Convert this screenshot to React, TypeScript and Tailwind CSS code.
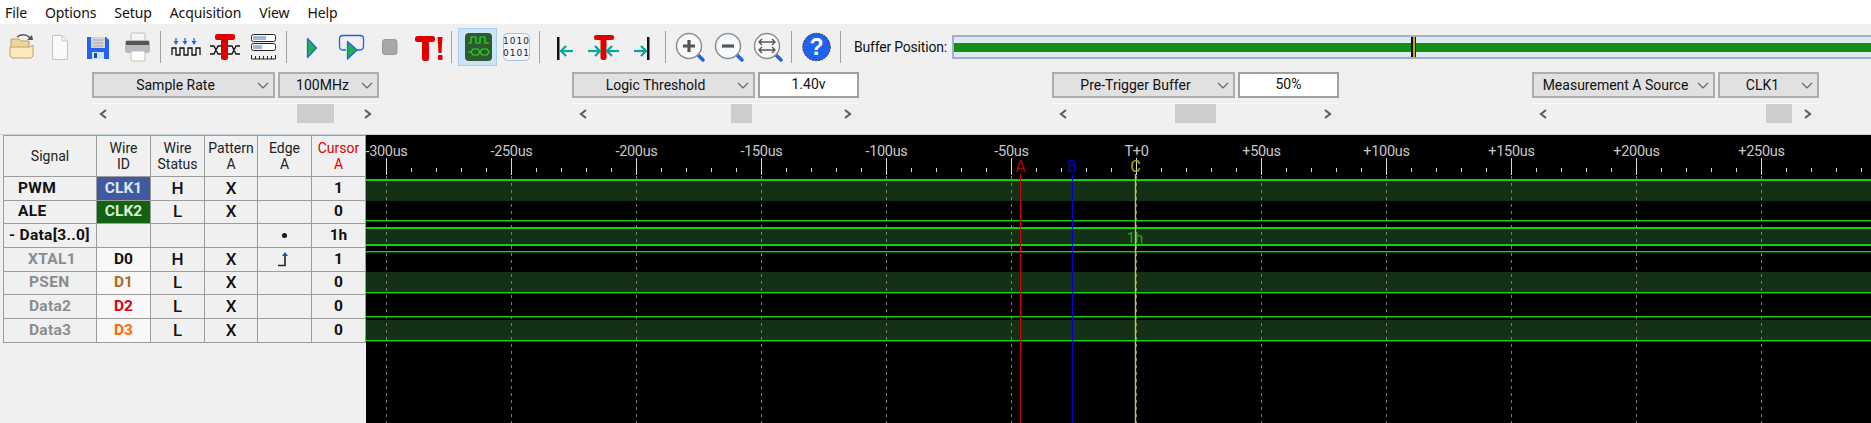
import type { ReactElement, ReactNode } from "react";

const menuItems = ["File", "Options", "Setup", "Acquisition", "View", "Help"];

const signals = [
  { name: "PWM", indent: "pl-[14px]", tone: "text-[#111]", id: "CLK1", idClass: "bg-[#3f5a9f] text-[#dfe6f5]", status: "H", pattern: "X", edge: "", cursor: "1" },
  { name: "ALE", indent: "pl-[14px]", tone: "text-[#111]", id: "CLK2", idClass: "bg-[#126212] text-[#d9eed9]", status: "L", pattern: "X", edge: "", cursor: "0" },
  { name: "- Data[3..0]", indent: "pl-[5px]", tone: "text-[#111]", id: "", idClass: "", status: "", pattern: "", edge: "dot", cursor: "1h" },
  { name: "XTAL1", indent: "pl-[24px]", tone: "text-[#8c8c8c]", id: "D0", idClass: "bg-[#f8f8f8] text-[#111]", status: "H", pattern: "X", edge: "rise", cursor: "1" },
  { name: "PSEN", indent: "pl-[25px]", tone: "text-[#8c8c8c]", id: "D1", idClass: "bg-[#f8f8f8] text-[#b0671f]", status: "L", pattern: "X", edge: "", cursor: "0" },
  { name: "Data2", indent: "pl-[25px]", tone: "text-[#8c8c8c]", id: "D2", idClass: "bg-[#f8f8f8] text-[#dd0011]", status: "L", pattern: "X", edge: "", cursor: "0" },
  { name: "Data3", indent: "pl-[25px]", tone: "text-[#8c8c8c]", id: "D3", idClass: "bg-[#f8f8f8] text-[#ff6a00]", status: "L", pattern: "X", edge: "", cursor: "0" }
];

const controls = [
  { label: "Sample Rate", value: "100MHz", input: false, thumb: "ml-[205px] w-[37px]" },
  { label: "Logic Threshold", value: "1.40v", input: true, thumb: "ml-[159px] w-[21px]" },
  { label: "Pre-Trigger Buffer", value: "50%", input: true, thumb: "ml-[123px] w-[41px]" },
  { label: "Measurement A Source", value: "CLK1", input: false, thumb: "ml-[234px] w-[26px]" }
];

const timeLabels = ["-300us", "-250us", "-200us", "-150us", "-100us", "-50us", "T+0", "+50us", "+100us", "+150us", "+200us", "+250us"];
const tickCount = 60;
const canvasFont = "Roboto, sans-serif";

function ToolButton({ children, active }: { children: ReactNode; active?: boolean }): ReactElement {
  return (
    <div className={`h-[38px] w-[39px] shrink-0 ${active ? "border border-[#a6d0f2] bg-[#cce4f7]" : ""}`}>
      <svg width="39" height="38" viewBox="0 0 39 38" className={active ? "-m-px" : ""}>
        {children}
      </svg>
    </div>
  );
}

function Separator({ className }: { className: string }): ReactElement {
  return <div className={`h-[32px] w-px shrink-0 bg-[#a0a0a0] ${className}`} />;
}

function Arrow({ x, dir }: { x: number; dir: 1 | -1 }): ReactElement {
  // teal arrow, x is where the tip sits
  return (
    <g stroke="#00a8a0" strokeWidth="2.2" fill="none">
      <path d={`M${x} 23H${x - dir * 12}`} />
      <path d={`M${x - dir * 5} 18L${x} 23L${x - dir * 5} 28`} />
    </g>
  );
}

function Lens({ children }: { children: ReactNode }): ReactElement {
  return (
    <>
      <path d="M25 25L32 32" stroke="#1f62f0" strokeWidth="3.5" strokeLinecap="round" />
      <circle cx="18" cy="18" r="12.5" fill="#f6f9fc" stroke="#8f8f8f" strokeWidth="1.5" />
      {children}
    </>
  );
}

function Toolbar(): ReactElement {
  return (
    <div className="flex h-[38px] items-center pl-[2px]">
      <ToolButton>
        <path d="M9 15V11H17L19 13H27V28H9Z" fill="#eed59c" stroke="#c0a264" strokeWidth="1" />
        <path d="M8 19H28L31 17V28L29 30H10L8 28Z" fill="#fbe8bd" stroke="#c0a264" strokeWidth="1" />
        <path d="M15 9C19 6 25 6 28 10" fill="none" stroke="#555" strokeWidth="1.5" />
        <path d="M25 12L31 12L30 7Z" fill="#555" />
      </ToolButton>
      <ToolButton>
        <path d="M11.5 7.5H21L26.5 13V31.5H11.5Z" fill="#fafafa" stroke="#c8c8c8" />
        <path d="M21 7.5V13H26.5" fill="none" stroke="#c8c8c8" />
      </ToolButton>
      <ToolButton>
        <path d="M7 9H26L29 12V31H7Z" fill="#2662f0" />
        <rect x="11" y="9" width="14" height="11" fill="#d4d4d4" />
        <path d="M13 12H23M13 15H23M13 18H23" stroke="#a8a8a8" />
        <rect x="12" y="24" width="12" height="7" fill="#cfe0fa" />
        <rect x="14" y="25" width="3" height="5" fill="#1a4ab8" />
      </ToolButton>
      <ToolButton>
        <rect x="12" y="5" width="14" height="8" rx="1" fill="#f4f4f4" stroke="#c0c0c0" />
        <rect x="6" y="12" width="25" height="13" rx="3" fill="#b4bac0" />
        <rect x="7" y="13" width="23" height="4" fill="#555" />
        <rect x="12" y="23" width="14" height="10" rx="1" fill="#fff" stroke="#c0c0c0" />
      </ToolButton>
      <Separator className="ml-[2px] mr-[6px]" />
      <ToolButton>
        <path d="M5 27V20H9V27H13V20H17V27H21V20H25V27H29V20H33V27" fill="none" stroke="#111" strokeWidth="1.3" />
        <path d="M9 10V15M18 10V15M27 10V15" stroke="#1f62f0" strokeWidth="1.3" />
        <path d="M6.5 13L9 17L11.5 13ZM15.5 13L18 17L20.5 13ZM24.5 13L27 17L29.5 13Z" fill="#1f62f0" />
      </ToolButton>
      <ToolButton>
        <path d="M4 18H8L12 26H17M4 26H8L12 18H17M21 18H26L30 26H34M21 26H26L30 18H34" fill="none" stroke="#111" strokeWidth="1.3" />
        <rect x="9" y="6" width="20" height="6" rx="2" fill="#e00000" />
        <rect x="15" y="7" width="7" height="25" rx="2.5" fill="#e00000" />
      </ToolButton>
      <ToolButton>
        <rect x="6.5" y="6.5" width="24" height="7" rx="2" fill="#fff" stroke="#222" />
        <rect x="8" y="8" width="13" height="4" fill="#9db8d8" />
        <rect x="6.5" y="15.5" width="24" height="7" rx="2" fill="#fff" stroke="#222" />
        <rect x="8" y="17" width="9" height="4" fill="#9db8d8" />
        <path d="M6.5 27V31H30.5V27M10.5 28V31M14.5 28V31M18.5 28V31M22.5 28V31M26.5 28V31" fill="none" stroke="#222" />
      </ToolButton>
      <Separator className="ml-[2px] mr-[6px]" />
      <ToolButton>
        <path d="M14.5 10.5L23.5 20L14.5 29.5Z" fill="#22b244" stroke="#1f62f0" strokeWidth="1.3" strokeLinejoin="round" />
      </ToolButton>
      <ToolButton>
        <path d="M14 22H11Q7.5 22 7.5 18V11Q7.5 7.5 11 7.5H28Q31.5 7.5 31.5 11V18Q31.5 22 28 22H25" fill="none" stroke="#1f62f0" strokeWidth="1.3" />
        <path d="M15.5 13.5L25 22L15.5 31Z" fill="#22b244" stroke="#1f62f0" strokeWidth="1.3" strokeLinejoin="round" />
      </ToolButton>
      <ToolButton>
        <rect x="11.5" y="11.5" width="14.5" height="15" rx="2.5" fill="#a8a8a8" stroke="#979797" />
      </ToolButton>
      <ToolButton>
        <rect x="5" y="8" width="20" height="6" rx="2.5" fill="#e00000" />
        <rect x="12" y="8" width="7" height="25" rx="2.5" fill="#e00000" />
        <path d="M27.5 9H32.5L31.5 25H28.5Z" fill="#e00000" />
        <rect x="28" y="27" width="4.5" height="5" rx="1" fill="#e00000" />
      </ToolButton>
      <Separator className="ml-[2px] mr-[6px]" />
      <ToolButton active>
        <rect x="7" y="5" width="27" height="28" rx="4" fill="#2e5a2e" />
        <path d="M10 15H13V9H18V15H22V9H27V15H31" fill="none" stroke="#22e022" strokeWidth="1.2" />
        <path d="M10 24H13L15 21H20L22 24L24 21H29L31 24L29 27H24L22 24L20 27H15L13 24" fill="none" stroke="#22e022" strokeWidth="1.2" />
      </ToolButton>
      <ToolButton>
        <rect x="6.5" y="5.5" width="26" height="27" rx="4" fill="#f2f5fa" stroke="#a8c4e0" />
        <text x="19.5" y="16" textAnchor="middle" fontSize="9" fontFamily="'DejaVu Sans', sans-serif" fill="#222" letterSpacing="1">1010</text>
        <text x="19.5" y="28" textAnchor="middle" fontSize="9" fontFamily="'DejaVu Sans', sans-serif" fill="#222" letterSpacing="1">0101</text>
      </ToolButton>
      <Separator className="ml-[3px] mr-[6px]" />
      <ToolButton>
        <rect x="11" y="9" width="2.5" height="23" fill="#111" />
        <Arrow x={15} dir={-1} />
      </ToolButton>
      <ToolButton>
        <rect x="9" y="7" width="20" height="5" rx="2" fill="#e00000" />
        <rect x="15.5" y="7" width="6" height="25" rx="2.5" fill="#e00000" />
        <Arrow x={15} dir={1} />
        <Arrow x={22} dir={-1} />
      </ToolButton>
      <ToolButton>
        <rect x="23" y="9" width="2.5" height="23" fill="#111" />
        <Arrow x={22} dir={1} />
      </ToolButton>
      <Separator className="ml-[2px] mr-[5px]" />
      <ToolButton>
        <Lens>
          <path d="M12 18H24M18 12V24" stroke="#555" strokeWidth="3.2" />
        </Lens>
      </ToolButton>
      <ToolButton>
        <Lens>
          <path d="M12 18H24" stroke="#555" strokeWidth="3.2" />
        </Lens>
      </ToolButton>
      <ToolButton>
        <Lens>
          <path d="M10 14H26M10 22H26M13 11L10 14L13 17M23 11L26 14L23 17M13 19L10 22L13 25M23 19L26 22L23 25" fill="none" stroke="#555" strokeWidth="1.4" />
        </Lens>
      </ToolButton>
      <Separator className="ml-[3px] mr-[5px]" />
      <ToolButton>
        <circle cx="19.5" cy="19" r="13.7" fill="#1f62f0" stroke="#333" strokeWidth="1" strokeDasharray="2 1" />
        <text x="19.5" y="27" textAnchor="middle" fontSize="23" fontWeight="700" fontFamily="'Liberation Sans', sans-serif" fill="#fff">?</text>
      </ToolButton>
      <Separator className="ml-[4px] mr-[13px]" />
      <span className="w-[98px] shrink-0 whitespace-nowrap text-[14px] tracking-[-0.2px] text-[#111]">Buffer Position:</span>
      <div className="relative flex h-[24px] flex-1 items-center border-y-2 border-l-2 border-[#9db2cc] bg-[#dfe7f1]">
        <div className="h-[9px] w-full bg-[#138d13]" />
        <div className="absolute left-[457px] top-0 h-full w-[5px] bg-[#111]" />
        <div className="absolute left-[459px] top-0 h-full w-[2px] bg-[#b8b800]" />
      </div>
    </div>
  );
}

function Chevron(): ReactElement {
  return (
    <svg width="12" height="7" viewBox="0 0 12 7" className="mr-[2px] shrink-0">
      <path d="M1 1L6 6L11 1" fill="none" stroke="#666" strokeWidth="1.2" />
    </svg>
  );
}

function Combo({ label, className }: { label: string; className: string }): ReactElement {
  return (
    <div className={`flex h-[26px] items-center border-2 border-[#adadad] bg-[#e1e1e1] pr-[2px] text-[14px] text-[#111] ${className}`}>
      <span className="flex-1 whitespace-nowrap pt-px text-center">{label}</span>
      <Chevron />
    </div>
  );
}

function ScrollArrow({ right }: { right?: boolean }): ReactElement {
  return (
    <svg width="9" height="10" viewBox="0 0 9 10" className="shrink-0">
      <path d={right ? "M2 1L7 5L2 9" : "M7 1L2 5L7 9"} fill="none" stroke="#606060" strokeWidth="2.2" />
    </svg>
  );
}

function ControlGroup({ label, value, input, thumb }: (typeof controls)[number]): ReactElement {
  return (
    <div className="w-[480px] shrink-0">
      <div className="w-[287px]">
        <div className="flex h-[26px] gap-[3px]">
          <Combo label={label} className="w-[183px]" />
          {input ? (
            <div className="flex h-[26px] w-[101px] items-center justify-center border-2 border-[#a0a0a0] bg-white pb-[1px] text-[14px] text-[#111]">
              {value}
            </div>
          ) : (
            <Combo label={value} className="w-[101px] pl-[4px]" />
          )}
        </div>
        <div className="relative mt-[5px] flex h-[20px] items-center justify-between border-t border-[#fafafa] px-[7px]">
          <ScrollArrow />
          <ScrollArrow right />
          <div className="absolute inset-y-0 left-0 w-full">
            <div className={`h-full bg-[#cdcdcd] ${thumb}`} />
          </div>
        </div>
      </div>
    </div>
  );
}

function Cell({ children, className = "" }: { children?: ReactNode; className?: string }): ReactElement {
  return (
    <div className={`flex items-center justify-center border-b border-r border-[#9c9c9c] ${className}`}>
      {children}
    </div>
  );
}

function EdgeMark({ kind }: { kind: string }): ReactElement | null {
  if (kind === "dot") return <div className="size-[5px] rounded-full bg-[#111]" />;
  if (kind === "rise") {
    return (
      <svg width="12" height="16" viewBox="0 0 12 16" className="-ml-[3px]">
        <path d="M1 14.5H8V3" fill="none" stroke="#222" strokeWidth="1.6" />
        <path d="M8 1L5 5H11Z" fill="#1f4fc0" />
      </svg>
    );
  }
  return null;
}

function SignalTable(): ReactElement {
  return (
    <div className="w-[366px] shrink-0 bg-[#f0f0f0] pl-[3px] text-[#111]">
      <div className="grid grid-cols-[93px_54px_54px_53px_54px_54px] grid-rows-[41px_repeat(7,23.7px)] border-t border-l border-[#9c9c9c]">
        {[["Signal"], ["Wire", "ID"], ["Wire", "Status"], ["Pattern", "A"], ["Edge", "A"], ["Cursor", "A"]].map((lines) => (
          <Cell key={lines.join("")} className={`flex-col text-[14px] leading-[16px] ${lines[0] === "Cursor" ? "text-[#e00000]" : "text-[#222]"}`}>
            {lines.map((line) => (
              <span key={line}>{line}</span>
            ))}
          </Cell>
        ))}
        {signals.map((row) => (
          <div key={row.name} className="contents">
            <Cell className={`!justify-start whitespace-nowrap text-[15.5px] font-bold tracking-[0.3px] ${row.indent} ${row.tone}`}>{row.name}</Cell>
            <Cell className={`text-[15.5px] font-bold ${row.idClass}`}>{row.id}</Cell>
            <Cell className="text-[17px] font-medium">{row.status}</Cell>
            <Cell className="text-[17px] font-medium">{row.pattern}</Cell>
            <Cell>
              <EdgeMark kind={row.edge} />
            </Cell>
            <Cell className="text-[15.5px] font-bold">{row.cursor}</Cell>
          </div>
        ))}
      </div>
    </div>
  );
}

function WaveCanvas(): ReactElement {
  const ticks = Array.from({ length: tickCount }, (_, i) => 386.5 + i * 25);
  const majors = ticks.filter((_, i) => i % 5 === 0);

  return (
    <div className="min-w-0 flex-1 bg-black">
      <svg width="1505" height="288" viewBox="366 135 1505 288" className="block">
        {[[180, 21], [228, 17], [272, 21], [320, 21]].map(([y, h]) => (
          <rect key={y} x="366" y={y} width="1505" height={h} fill="#143116" />
        ))}
        {ticks.map((x, i) =>
          i % 5 === 0 ? (
            <path key={x} d={`M${x} 158V175`} stroke="#d8d8d8" />
          ) : (
            <path key={x} d={`M${x} 168V172`} stroke="#d8d8d8" />
          )
        )}
        {majors.map((x) => (
          <path key={x} d={`M${x} 176V423`} stroke="#7a7a7a" strokeDasharray="3 4" />
        ))}
        {[180, 221, 228, 245, 252, 293, 317, 341].map((y) => (
          <rect key={y} x="366" y={y - 1} width="1505" height={y === 180 || y === 228 || y === 245 ? 2 : 1.4} fill="#14d014" />
        ))}
        {timeLabels.map((label, i) => (
          <text key={label} x={386.5 + i * 125} y="155.5" textAnchor="middle" fontSize="14.5" letterSpacing="-0.3" fontFamily={canvasFont} fill="#c8c8c8">
            {label}
          </text>
        ))}
        <text x="1135" y="243" textAnchor="middle" fontSize="15" fontFamily={canvasFont} fill="#1fae1f">1h</text>
        <path d="M1020.5 174V423" stroke="#d00000" />
        <path d="M1072.5 174V423" stroke="#0000d8" />
        <path d="M1135.5 174V423" stroke="#c8c840" strokeWidth="1.4" />
        <text x="1020.5" y="172" textAnchor="middle" fontSize="16" fontFamily={canvasFont} fill="#b00000">A</text>
        <text x="1072.5" y="172" textAnchor="middle" fontSize="16" fontFamily={canvasFont} fill="#0000d0">B</text>
        <text x="1135.5" y="172" textAnchor="middle" fontSize="16" fontFamily={canvasFont} fill="#b0b000">C</text>
      </svg>
    </div>
  );
}

export default function App(): ReactElement {
  return (
    <div className="flex h-[423px] w-[1871px] flex-col overflow-hidden bg-white font-['Roboto',sans-serif]">
      <div className="flex h-[24px] items-center gap-[18px] pl-[5px] font-['Noto_Sans',sans-serif] text-[14px] tracking-[-0.1px] text-[#111]">
        {menuItems.map((item) => (
          <span key={item}>{item}</span>
        ))}
      </div>
      <div className="h-[111px] border-b border-[#c4d0dc] bg-[#f0f0f0] pt-[4px]">
        <Toolbar />
        <div className="mt-[6px] flex pl-[92px]">
          {controls.map((control) => (
            <ControlGroup key={control.label} {...control} />
          ))}
        </div>
      </div>
      <div className="flex min-h-0 flex-1">
        <SignalTable />
        <WaveCanvas />
      </div>
    </div>
  );
}
